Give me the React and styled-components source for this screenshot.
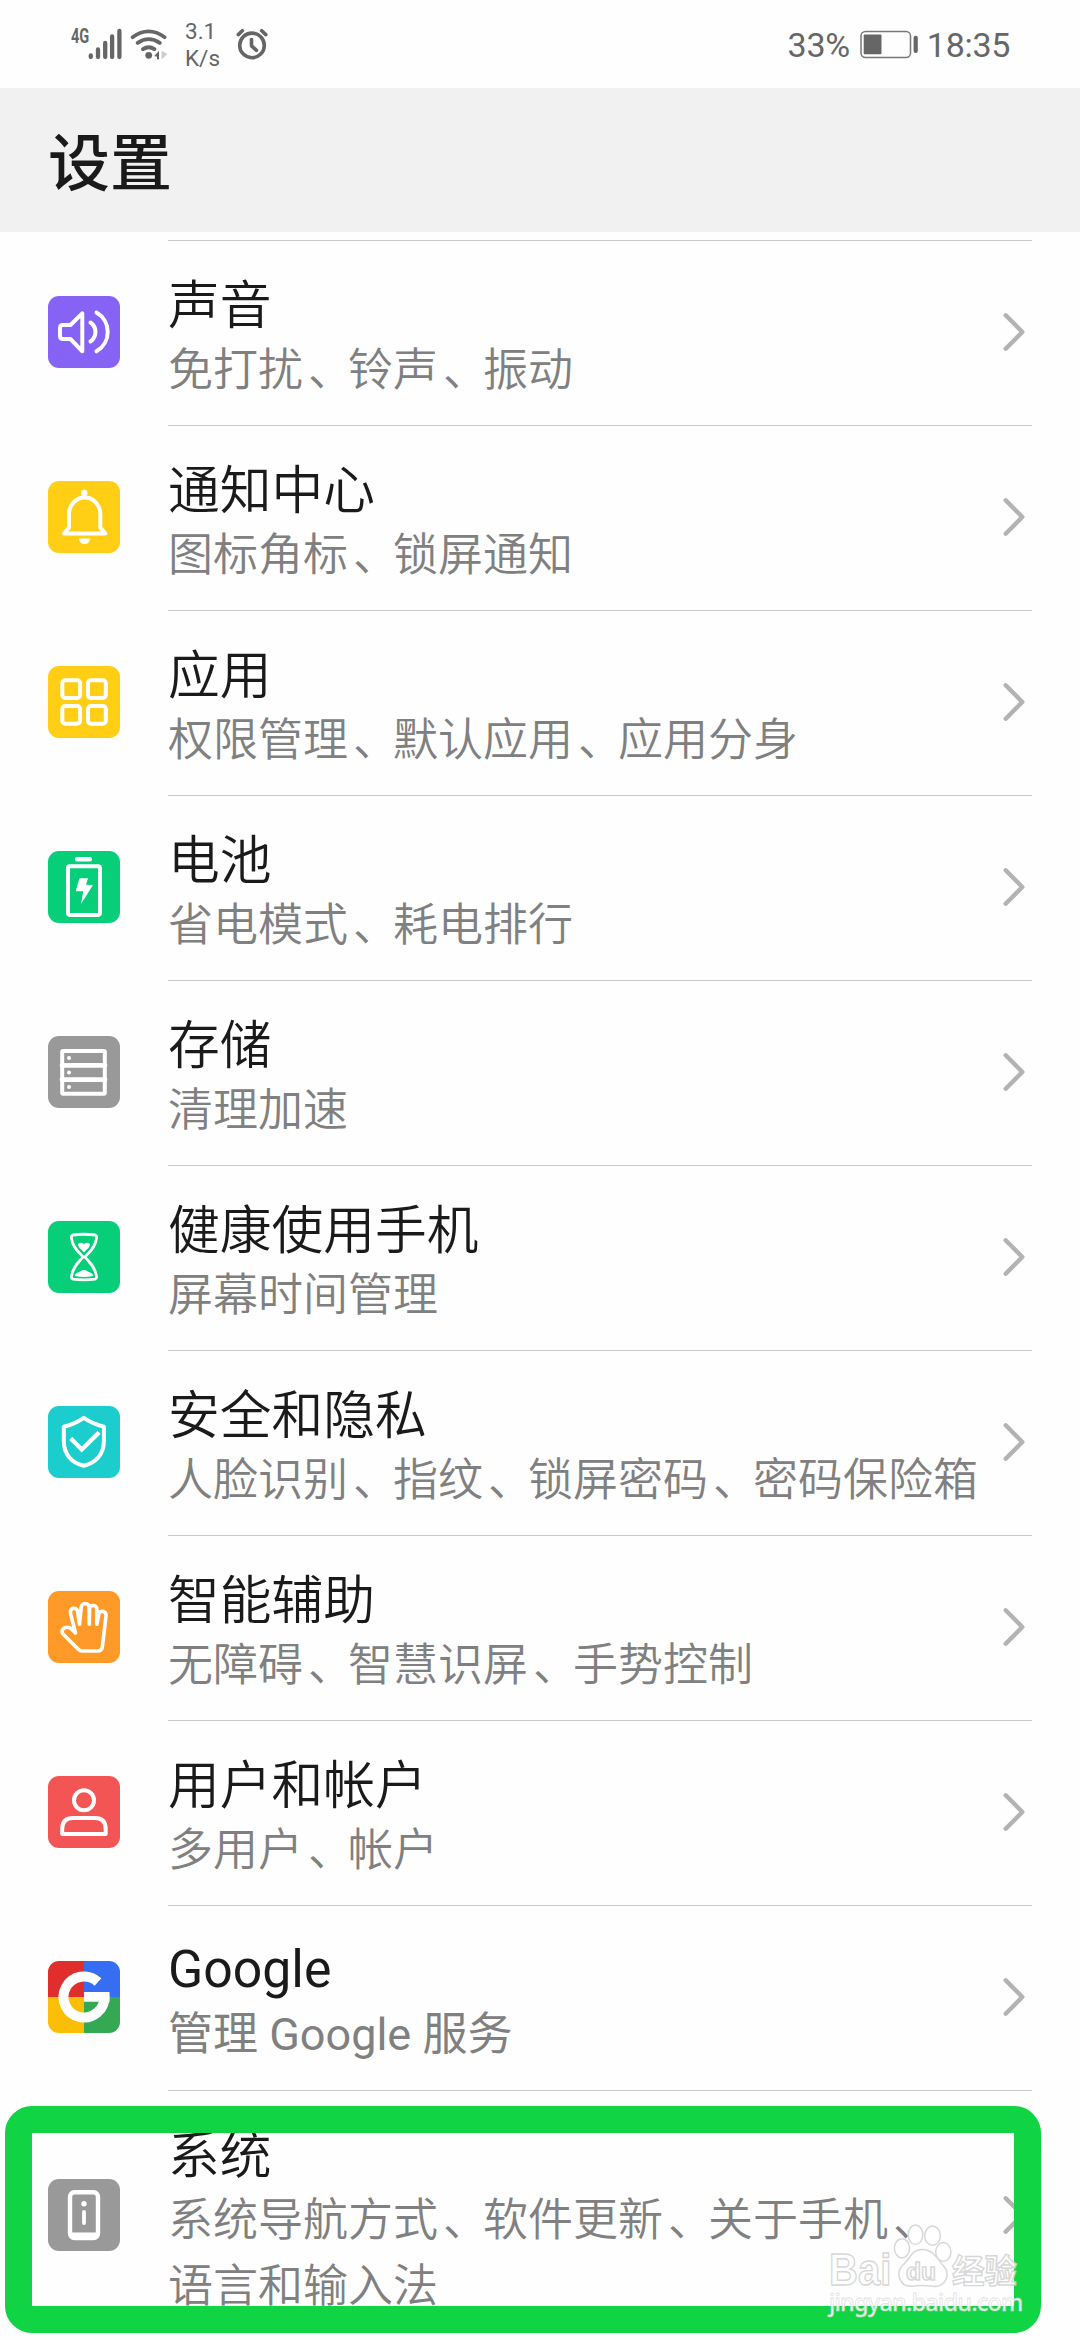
import React from "react";
import styled, { createGlobalStyle } from "styled-components";

const GlobalStyle = createGlobalStyle`
  *, *::before, *::after { box-sizing: border-box; }
  body {
    margin: 0;
    background: #fefefe;
    font-family: Roboto, "Noto Sans CJK SC", sans-serif;
  }
`;

const Screen = styled.div`
  position: relative;
  width: 1080px;
  height: 2340px;
  overflow: hidden;
  background: #fefefe;
`;

const StatusBar = styled.header`
  display: flex;
  justify-content: space-between;
  height: 88px;
  padding: 0 70px 0 71px;
  color: #666;
`;

const StatusGroup = styled.div`
  display: flex;
  align-items: center;
  height: 88px;
`;

const NetworkType = styled.span`
  width: 17px;
  margin-top: -16px;
  font-size: 20.5px;
  line-height: 20px;
  font-weight: 700;
  transform: scaleX(0.71);
  transform-origin: 0 50%;
  white-space: nowrap;
`;

const StatusIcon = styled.svg`
  display: block;
  flex: none;
  margin-left: ${(p) => p.$gap || 0}px;
`;

const Speed = styled.div`
  width: 40px;
  margin-left: 17px;
  padding-top: 1px;
  font-size: 22.5px;
  line-height: 27px;
`;

const StatusText = styled.span`
  padding-top: 1px;
  margin-left: ${(p) => p.$gap || 0}px;
  font-size: 34px;
  line-height: 40px;
  letter-spacing: -0.3px;
`;

const TitleBar = styled.div`
  display: flex;
  align-items: center;
  height: 144px;
  padding: 9px 48px 0;
  background: #f1f1f1;
`;

const PageTitle = styled.h1`
  margin: 0;
  font-size: 62px;
  line-height: 80px;
  font-weight: 500;
  color: #1a1a1a;
`;

const List = styled.main`
  display: flex;
  flex-direction: column;
  padding-top: 8px;
`;

const Row = styled.section`
  display: flex;
  flex: none;
  height: ${(p) => (p.$tall ? 251 : 185)}px;
  padding: 0 48px;
`;

const IconCell = styled.div`
  display: flex;
  align-items: center;
  width: 120px;
  padding-bottom: 1px;
`;

const Tile = styled.svg`
  display: block;
  width: 72px;
  height: 72px;
  border-radius: 11px;
  background: ${(p) => p.$color};
  fill: none;
  stroke: #fff;
  stroke-width: 4;
  stroke-linecap: round;
  stroke-linejoin: round;
`;

const RowBody = styled.div`
  display: flex;
  flex: 1;
  justify-content: space-between;
  border-top: 1px solid #c9c9c9;
`;

const Labels = styled.div`
  width: 818px;
`;

const Label = styled.div`
  height: ${(p) => (p.$latin ? 96 : 97)}px;
  padding-top: ${(p) => (p.$latin ? 32 : 34)}px;
  font-size: 51.75px;
  line-height: 63px;
  font-weight: ${(p) => (p.$latin ? 400 : 350)};
  color: #1a1a1a;
`;

const Summary = styled.div`
  font-size: 45px;
  line-height: 65.5px;
  font-weight: ${(p) => (p.$latin ? 400 : 350)};
  color: #808080;
  white-space: pre-line;
`;

const Comma = styled.span`
  margin-left: 5px;
  letter-spacing: -5px;
`;

const Chevron = styled.svg`
  display: block;
  flex: none;
  align-self: center;
  width: 24px;
  height: 40px;
  margin: 0 6px 2px 0;
`;

const Highlight = styled.div`
  position: absolute;
  left: 5px;
  top: 2106px;
  width: 1036px;
  height: 227px;
  border: 27px solid #11d444;
  border-radius: 27px;
`;

const Watermark = styled.div`
  position: absolute;
  left: 829px;
  top: 2222px;
  width: 200px;
  color: rgba(255, 255, 255, 0.85);
  -webkit-text-stroke: 1.4px rgba(205, 205, 205, 0.8);
`;

const WatermarkBrand = styled.div`
  display: flex;
  align-items: flex-end;
  height: 66px;
`;

const BrandLatin = styled.span`
  width: 64px;
  font: 700 45px/44px "Liberation Sans", Arial, sans-serif;
  padding-top: 4px;
  margin-bottom: -4px;
  transform: scaleX(0.89);
  transform-origin: 0 50%;
`;

const BrandHan = styled.span`
  margin-left: -1px;
  font: 700 32.5px/38px "Noto Sans CJK SC", sans-serif;
`;

const WatermarkUrl = styled.div`
  font: 500 23.5px/28px "Noto Sans", sans-serif;
  letter-spacing: -0.8px;
  white-space: nowrap;
  -webkit-text-stroke: 0.8px rgba(205, 205, 205, 0.6);
`;

const PawText = styled.text`
  font: 700 24px "Liberation Sans", Arial, sans-serif;
`;

const SoundIcon = () => (
  <>
    <path d="M15 29h7.5L34.3 17.3v38L22.5 43H15q-3 0-3-3v-8q0-3 3-3z" />
    <path d="M42.5 26.5a11.6 11.6 0 0 1 0 19" />
    <path d="M48.5 16.5a22.4 22.4 0 0 1 0 38.8" />
  </>
);

const BellIcon = () => (
  <>
    <circle cx="36.3" cy="12" r="3.2" fill="#fff" stroke="none" />
    <path d="M21 33a15.6 16.5 0 0 1 31.3 0V46.5l5 6H16l5-6z" />
    <path d="M31 57.5h11c0 3.5-2.5 5.5-5.5 5.5S31 61 31 57.5z" fill="#fff" stroke="none" />
  </>
);

const AppsIcon = () => (
  <>
    <rect x="14.3" y="14.2" width="17.8" height="17.8" rx="3" />
    <rect x="40" y="14.2" width="17.8" height="17.8" rx="3" />
    <rect x="14.3" y="40" width="17.8" height="17.8" rx="3" />
    <rect x="40" y="40" width="17.8" height="17.8" rx="3" />
  </>
);

const BatteryIcon = () => (
  <>
    <rect x="27" y="6" width="17" height="4.4" rx="2" fill="#fff" stroke="none" />
    <rect x="20" y="15.3" width="32" height="48.6" rx="1.8" />
    <path d="M31.5 27.3H40l-2 6.4 7 .3-12 19 2.3-12.7h-7.6z" fill="#fff" stroke="none" />
  </>
);

const StorageIcon = () => (
  <>
    <rect x="14.2" y="15.1" width="42.6" height="42.6" rx="1" />
    <path d="M14 29.3h43M14 43.6h43" strokeWidth="4.8" />
    <g fill="#fff" stroke="none">
      <circle cx="21" cy="22" r="2" />
      <circle cx="21" cy="36.6" r="2" />
      <circle cx="21" cy="51" r="2" />
    </g>
  </>
);

const HourglassIcon = () => (
  <>
    <path
      d="M25 14q11-1.500 22 0q2 .4 1.600 3C47 28 41 31 37.800 35q-1 1 0 2C41 41 47 45 48.500 55.500q.3 2.200-1.500 2.600q-11 1.500-22 0q-1.800-.4-1.500-2.600C25 45 31 41 34.200 37q1-1 0-2C31 31 25 28 23.400 17q-.4-2.600 1.600-3z"
      strokeWidth="2.8"
    />
    <path d="M30 23q3-2.500 6 0q3-2.500 6 0c0 4-4 5.500-6 8.500-2-3-6-4.500-6-8.500z" fill="#fff" stroke="none" />
    <path d="M27 55c-.5-3 4-3.500 6-5q3-2 6 0c2 1.500 6.500 2 6 5q-9 1.800-18 0z" fill="#fff" stroke="none" />
  </>
);

const ShieldIcon = () => (
  <>
    <path d="M35.700 11.800Q45 18 55.900 20.700V35c0 13-8 22-20.200 24.700C23.500 57 15.800 48 15.800 35V20.700Q27 18 35.700 11.800z" />
    <path d="M24.300 33.900l9.500 9.600L49.500 27.900" strokeWidth="4.300" strokeLinecap="square" strokeLinejoin="miter" />
  </>
);

const HandIcon = () => (
  <path
    d="M34.500 60h15q4.500 0 5-5L58 25q.3-3.500-2.500-4.500t-4.500 2L48.800 33.300 48.900 18.500c0-2.500-1.500-4-3.700-4s-3.700 1.500-3.700 4L41.300 33.300 41 16.500c0-2.500-1.600-4-3.800-4s-4 1.500-4 4L31.500 33.300 29.500 20c-.8-2.300-2.600-3.300-4.800-2.500s-2.600 2.700-2.200 5L27.500 42l-4-4c-2-2-4-2-6-1.500-3.500 1-4.500 4.500-2 7L30 58q2 2 4.500 2z"
    strokeWidth="3.600"
  />
);

const UserIcon = () => (
  <>
    <circle cx="36" cy="24.300" r="10" />
    <path d="M14.200 58V53q0-11 11-11h21.500q11 0 11 11v5z" />
  </>
);

const GoogleIcon = () => (
  <>
    <g stroke="none">
      <path d="M0 0h36v36H0z" fill="#df2e2b" />
      <path d="M36 0h36v36H36z" fill="#356ef2" />
      <path d="M0 36h36v36H0z" fill="#fbbe07" />
      <path d="M36 36h36v36H36z" fill="#35a853" />
    </g>
    <path d="M50 21A20.500 20.500 0 1 0 56.500 35" strokeWidth="10" strokeLinecap="butt" />
    <path d="M36 35.900H61.500" strokeWidth="9.800" strokeLinecap="butt" />
  </>
);

const SystemIcon = () => (
  <>
    <rect x="22" y="13.300" width="28" height="45.700" rx="4.500" strokeWidth="4.400" />
    <path d="M23 56.500h26" strokeWidth="6" strokeLinecap="butt" />
    <circle cx="36" cy="24.700" r="2.700" fill="#fff" stroke="none" />
    <path d="M36 33v11" strokeWidth="3.800" />
  </>
);

const ITEMS = [
  { label: "声音", summary: "免打扰、铃声、振动", color: "#8662f5", Icon: SoundIcon },
  { label: "通知中心", summary: "图标角标、锁屏通知", color: "#ffce15", Icon: BellIcon },
  { label: "应用", summary: "权限管理、默认应用、应用分身", color: "#ffce15", Icon: AppsIcon },
  { label: "电池", summary: "省电模式、耗电排行", color: "#07ce79", Icon: BatteryIcon },
  { label: "存储", summary: "清理加速", color: "#999999", Icon: StorageIcon },
  { label: "健康使用手机", summary: "屏幕时间管理", color: "#07ce79", Icon: HourglassIcon },
  { label: "安全和隐私", summary: "人脸识别、指纹、锁屏密码、密码保险箱", color: "#1bcecd", Icon: ShieldIcon },
  { label: "智能辅助", summary: "无障碍、智慧识屏、手势控制", color: "#ff9a28", Icon: HandIcon },
  { label: "用户和帐户", summary: "多用户、帐户", color: "#f35555", Icon: UserIcon },
  { label: "Google", summary: "管理 Google 服务", color: "#ffffff", Icon: GoogleIcon, latin: true },
  { label: "系统", summary: "系统导航方式、软件更新、关于手机、\n语言和输入法", color: "#999999", Icon: SystemIcon, tall: true },
];

// The enumeration comma sits slightly right of its usual place in the em box.
const withCommas = (text) =>
  text.split("、").map((part, i) => (
    <React.Fragment key={i}>
      {i > 0 && <Comma>、</Comma>}
      {part}
    </React.Fragment>
  ));

const SettingRow = ({ label, summary, color, Icon, tall, latin }) => (
  <Row $tall={tall}>
    <IconCell>
      <Tile $color={color} viewBox="0 0 72 72">
        <Icon />
      </Tile>
    </IconCell>
    <RowBody>
      <Labels>
        <Label $latin={latin}>{label}</Label>
        <Summary $latin={latin}>{withCommas(summary)}</Summary>
      </Labels>
      <Chevron viewBox="0 0 24 40" fill="none" stroke="#b3b3b3" strokeWidth="4.400" strokeLinecap="round" strokeLinejoin="round">
        <path d="M3.700 3.300 20.300 20 3.700 36.700" />
      </Chevron>
    </RowBody>
  </Row>
);

const SignalIcon = () => (
  <StatusIcon width="34" height="88" viewBox="88 0 34 88" stroke="#666" strokeWidth="4.300" strokeLinecap="round">
    <path d="M90.800 55.500v1.600M98 49.500v7.600M105.200 43v14.100M112.100 36.500v20.600M119.400 31v26.100" />
  </StatusIcon>
);

const WifiIcon = () => (
  <StatusIcon $gap={8} width="38" height="88" viewBox="130 0 38 88" fill="none" stroke="#666" strokeWidth="3.800" strokeLinecap="round">
    <path d="M132.600 37.200q16-11.600 32 0M137.700 42.900q11-7.600 22 0M143 49.100q5.700-3.800 11.400 0" />
    <circle cx="148.700" cy="55.300" r="3.400" fill="#666" stroke="none" />
    <path d="M154.300 56l4.700-5.200v8.400h-2v-2.500z" fill="#666" stroke="none" />
    <path d="M161.600 50.800l5.800 3.200-5.800 5.400z" fill="#ccc" stroke="none" />
  </StatusIcon>
);

const AlarmIcon = () => (
  <StatusIcon $gap={10} width="36" height="88" viewBox="235 0 36 88" fill="none" stroke="#666" strokeWidth="3.600" strokeLinecap="round" strokeLinejoin="round">
    <circle cx="252" cy="45.400" r="12.300" />
    <path d="M251.500 39.500v6.300l5 4.500" />
    <path d="M238.300 34.600l4-3.900M261.700 30.700l4.100 3.900" />
  </StatusIcon>
);

const BatteryLevel = () => (
  <StatusIcon $gap={10} width="60" height="88" viewBox="858 0 60 88">
    <rect x="859" y="31.500" width="49.500" height="26" rx="4.500" fill="none" stroke="#777" strokeWidth="1.500" />
    <rect x="861.700" y="34.500" width="17.800" height="19.700" rx="1" fill="#666" />
    <rect x="911.600" y="35.700" width="4.200" height="17.400" rx="2" fill="#666" />
  </StatusIcon>
);

const Paw = () => (
  <StatusIcon width="60" height="66" viewBox="893 2222 60 66" fill="rgba(255,255,255,0.7)" stroke="#d8d8d8" strokeWidth="1.500">
    <ellipse cx="902" cy="2248.300" rx="7.600" ry="9.600" />
    <ellipse cx="915.500" cy="2234.700" rx="7.300" ry="9.800" />
    <ellipse cx="932.500" cy="2235.700" rx="7.800" ry="9.600" />
    <ellipse cx="943.300" cy="2252" rx="7.600" ry="9.400" />
    <path d="M922 2249.500c-10 0-12 9-18 14.500-10 9-4 23 8 22.300q10-1.500 20 0c14 1.500 19-12 11-21-5-6-10-15.800-21-15.800z" />
    <PawText x="906" y="2280" textLength="30" lengthAdjust="spacingAndGlyphs">du</PawText>
  </StatusIcon>
);

export default function App() {
  return (
    <Screen>
      <GlobalStyle />
      <StatusBar>
        <StatusGroup>
          <NetworkType>4G</NetworkType>
          <SignalIcon />
          <WifiIcon />
          <Speed>
            3.1
            <br />
            K/s
          </Speed>
          <AlarmIcon />
        </StatusGroup>
        <StatusGroup>
          <StatusText>33%</StatusText>
          <BatteryLevel />
          <StatusText $gap={7}>18:35</StatusText>
        </StatusGroup>
      </StatusBar>
      <TitleBar>
        <PageTitle>设置</PageTitle>
      </TitleBar>
      <List>
        {ITEMS.map((item) => (
          <SettingRow key={item.label} {...item} />
        ))}
      </List>
      <Highlight />
      <Watermark>
        <WatermarkBrand>
          <BrandLatin>Bai</BrandLatin>
          <Paw />
          <BrandHan>经验</BrandHan>
        </WatermarkBrand>
        <WatermarkUrl>jingyan.baidu.com</WatermarkUrl>
      </Watermark>
    </Screen>
  );
}
